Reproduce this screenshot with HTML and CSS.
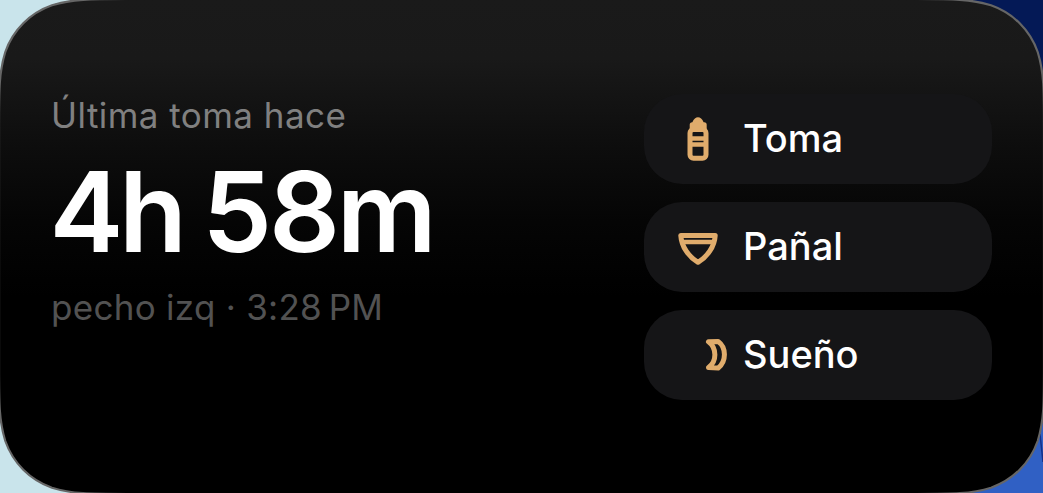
FILE: index.html
```html
<!DOCTYPE html>
<html lang="es">
<head>
  <meta charset="UTF-8" />
  <meta name="viewport" content="width=device-width, initial-scale=1.0" />
  <title>Última toma</title>
  <link rel="stylesheet" href="styles.css">
</head>
<body>
  <div class="widget">
    <svg class="fondo" viewBox="0 0 1043 493" aria-hidden="true">
      <defs>
        <linearGradient id="relleno" x1="0" y1="0" x2="0" y2="1">
          <stop offset="0" stop-color="#1a1a1a" />
          <stop offset="0.12" stop-color="#191919" />
          <stop offset="0.3" stop-color="#0d0d0d" />
          <stop offset="0.45" stop-color="#050505" />
          <stop offset="0.6" stop-color="#000" />
          <stop offset="1" stop-color="#000" />
        </linearGradient>
      </defs>
      <path d="M1040 434L1043 462" stroke="#12308a" stroke-width="1.5" />
      <path fill="url(#relleno)" stroke="#666" stroke-width="2.2" d="M127 -1H916C953 -1 971 -1 991 5.300C1013 13 1030 30 1037.700 52C1044 72 1044 90 1044 127V366C1044 403 1044 421 1037.700 441C1030 463 1013 480 991 487.700C971 494 953 494 916 494H127C90 494 72 494 52 487.700C30 480 13 463 5.300 441C-1 421 -1 403 -1 366V127C-1 90 -1 72 5.300 52C13 30 30 13 52 5.300C72 -1 90 -1 127 -1Z" />
    </svg>

    <div class="resumen">
      <div class="etiqueta">Última toma hace</div>
      <div class="tiempo">4h <span class="minutos">58</span>m</div>
      <div class="detalle">pecho izq · 3:28&#8201;PM</div>
    </div>

    <div class="acciones">
      <button class="boton">
        <svg class="icono" viewBox="0 0 48 48">
          <rect x="16" y="14.5" width="16" height="28.8" rx="3.5" />
          <path d="M18.200 14V9.800H30.200V14Z M20.500 8.500Q24 1.200 27.500 8.500Z" class="lleno" />
          <path d="M17 23.500H31M17 29.500H31" class="raya" />
        </svg>
        <span>Toma</span>
      </button>
      <button class="boton">
        <svg class="icono" viewBox="0 0 48 48">
          <path d="M6.800 12.500H41.200C40.500 24 33 34 24 39.300C15 34 7.500 24 6.800 12.500Z" />
          <path d="M9 19H39" class="raya" />
        </svg>
        <span>Pañal</span>
      </button>
      <button class="boton">
        <svg class="icono" viewBox="0 0 48 48">
          <path d="M34.500 10.800L44.200 10.500C52.500 16.500 52.500 30.500 44.200 37L34.500 36.500C43 30.500 43 17 34.500 10.800Z" />
        </svg>
        <span>Sueño</span>
      </button>
    </div>
  </div>
</body>
</html>
```
FILE: styles.css
```css
body {
  margin: 0;
  height: 100vh;
  overflow: hidden;
  font-family: Inter, 'Liberation Sans', sans-serif;
  background: linear-gradient(90deg, #c9e4eb 50%, transparent 50%),
    linear-gradient(#041956 50%, #3060c4 85%);
}

.widget {
  position: relative;
  box-sizing: border-box;
  height: 493px;
  padding: 94px 51px 93px 51px;
  display: flex;
  justify-content: space-between;
}

.fondo {
  position: absolute;
  inset: 0;
  width: 100%;
  height: 100%;
}

.resumen,
.acciones {
  z-index: 1;
  display: flex;
  flex-direction: column;
}

.resumen {
  margin-top: -1px;
  white-space: nowrap;
}

.etiqueta,
.detalle {
  font-size: 35px;
  line-height: 44px;
}

.etiqueta {
  color: #808080;
  letter-spacing: 0.45px;
}

.tiempo {
  color: #fff;
  font-size: 111px;
  font-weight: 600;
  line-height: 132px;
  margin: 9px 0 7px -1.5px;
  letter-spacing: -4.4px;
  word-spacing: -4px;
}

.minutos {
  letter-spacing: -3.1px;
}

.detalle {
  color: #525252;
  letter-spacing: 0.28px;
}

.acciones {
  width: 348px;
  gap: 18px;
}

.boton {
  display: flex;
  align-items: center;
  gap: 21px;
  height: 90px;
  padding: 0 30px;
  border: none;
  border-radius: 38px;
  background: #151517;
  color: #fff;
  font-family: inherit;
  font-size: 38px;
  font-weight: 500;
  cursor: pointer;
}

.boton span {
  padding-bottom: 2px;
}

.icono {
  width: 48px;
  height: 48px;
  overflow: visible;
  fill: none;
  stroke: #e0ac6c;
  stroke-width: 5;
  stroke-linecap: round;
  stroke-linejoin: round;
}

.lleno {
  fill: #e0ac6c;
}

.raya {
  stroke-width: 4.5;
}
```
